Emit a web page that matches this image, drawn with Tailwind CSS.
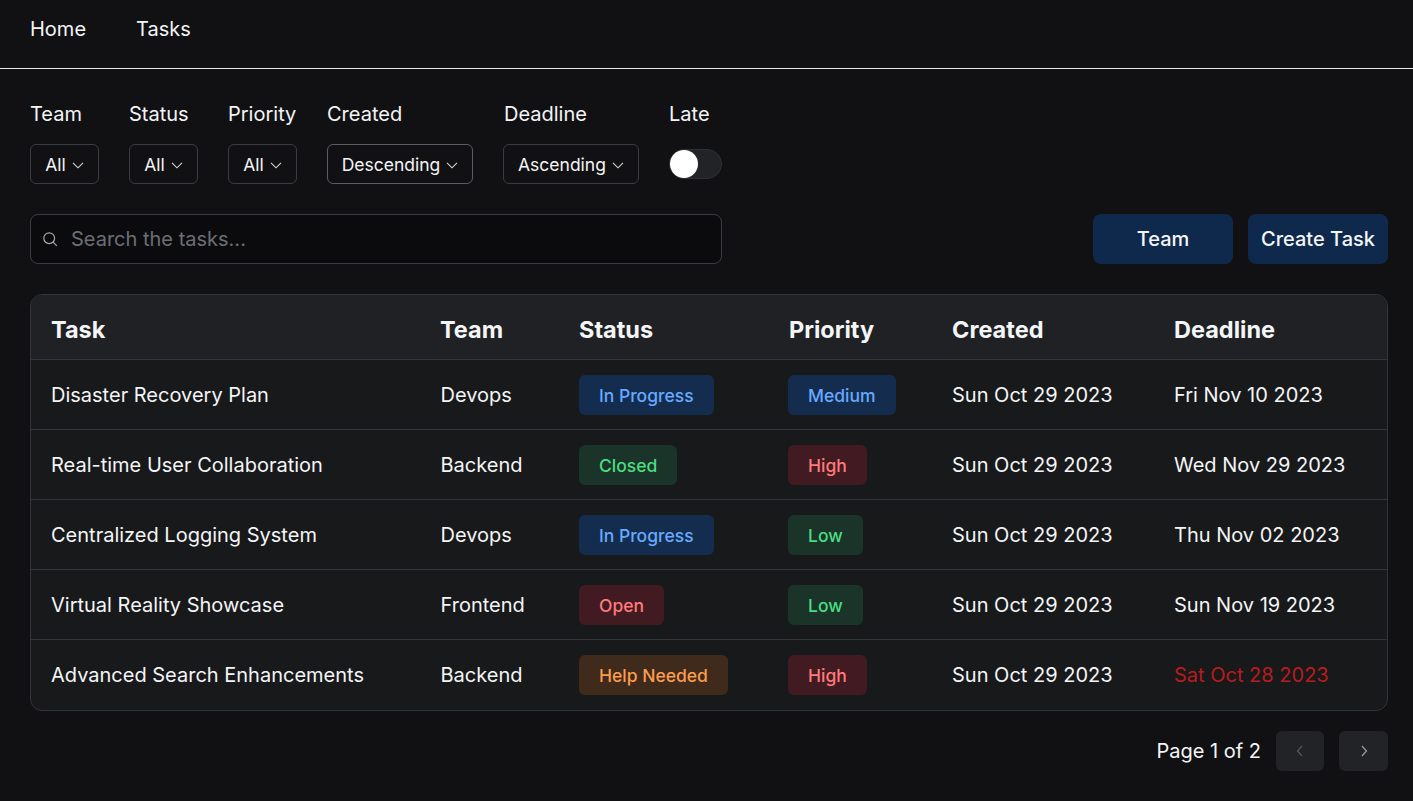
<!DOCTYPE html>
<html lang="en">
<head>
<meta charset="utf-8">
<title>Tasks</title>
<script src="https://cdn.jsdelivr.net/npm/@tailwindcss/browser@4"></script>
</head>
<body class="bg-[#111114] text-[#f4f5f6] font-['Inter',sans-serif] text-[20px] leading-[30px] overflow-hidden">

  <!-- Nav -->
  <nav class="h-[69px] border-b border-white/90 px-[30px] flex items-start pt-[14px] gap-[50px] text-[20px]">
    <a href="#" class="leading-[30px]">Home</a>
    <a href="#" class="leading-[30px]">Tasks</a>
  </nav>

  <main class="px-[25px] pl-[30px] pt-[30px]">
    <!-- Filters -->
    <div class="flex gap-[30px] h-[85px]">
      <div>
        <label class="block h-[45px] leading-[30px]">Team</label>
        <button class="h-10 w-[69px] pt-[2px] flex items-center justify-center gap-[6px] rounded-md border border-[#3a3d42] text-[17.5px]">All
          <svg class="w-3 h-3" viewBox="0 0 12 12" fill="none" stroke="#d5d7db" stroke-width="1.1"><path d="M1 3.8l5 5 5-5"/></svg>
        </button>
      </div>
      <div>
        <label class="block h-[45px] leading-[30px]">Status</label>
        <button class="h-10 w-[69px] pt-[2px] flex items-center justify-center gap-[6px] rounded-md border border-[#3a3d42] text-[17.5px]">All
          <svg class="w-3 h-3" viewBox="0 0 12 12" fill="none" stroke="#d5d7db" stroke-width="1.1"><path d="M1 3.8l5 5 5-5"/></svg>
        </button>
      </div>
      <div>
        <label class="block h-[45px] leading-[30px]">Priority</label>
        <button class="h-10 w-[69px] pt-[2px] flex items-center justify-center gap-[6px] rounded-md border border-[#3a3d42] text-[17.5px]">All
          <svg class="w-3 h-3" viewBox="0 0 12 12" fill="none" stroke="#d5d7db" stroke-width="1.1"><path d="M1 3.8l5 5 5-5"/></svg>
        </button>
      </div>
      <div>
        <label class="block h-[45px] leading-[30px]">Created</label>
        <button class="h-10 w-[146px] pt-[2px] flex items-center justify-center gap-[6px] rounded-md border border-[#5a5d63] text-[17.5px]">Descending
          <svg class="w-3 h-3" viewBox="0 0 12 12" fill="none" stroke="#d5d7db" stroke-width="1.1"><path d="M1 3.8l5 5 5-5"/></svg>
        </button>
      </div>
      <div>
        <label class="block h-[45px] leading-[30px] pl-px">Deadline</label>
        <button class="h-10 w-[136px] pt-[2px] flex items-center justify-center gap-[6px] rounded-md border border-[#3a3d42] text-[17.5px]">Ascending
          <svg class="w-3 h-3" viewBox="0 0 12 12" fill="none" stroke="#d5d7db" stroke-width="1.1"><path d="M1 3.8l5 5 5-5"/></svg>
        </button>
      </div>
      <div>
        <label class="block h-[50px] leading-[30px]">Late</label>
        <div class="w-[53px] h-[30px] rounded-full bg-[#212327] border border-[#2e3035] flex items-center">
          <span class="w-7 h-7 rounded-full bg-white"></span>
        </div>
      </div>
    </div>

    <!-- Search + actions -->
    <div class="flex justify-between items-start w-[1358px] mt-[30px]">
      <div class="w-[692px] h-[50px] rounded-lg border border-[#3a3d42] bg-[#0b0b0d] flex items-center pl-[11px] gap-[13px]">
        <svg class="w-4 h-4 shrink-0" viewBox="0 0 16 16" fill="none" stroke="#a5a8ad" stroke-width="1.2"><circle cx="7.2" cy="7.2" r="5.4"/><path d="M11.2 11.2l3.6 3.6"/></svg>
        <span class="text-[#6b6f76]">Search the tasks...</span>
      </div>
      <div class="flex gap-[15px]">
        <button class="w-[140px] h-[50px] rounded-lg bg-[#0f294d] font-medium">Team</button>
        <button class="w-[140px] h-[50px] rounded-lg bg-[#0f294d] font-medium">Create Task</button>
      </div>
    </div>

    <!-- Table -->
    <div class="w-[1358px] mt-[30px] rounded-xl border border-[#33353a] overflow-hidden bg-[#18191b]">
      <table class="w-full table-fixed border-collapse">
        <colgroup>
          <col class="w-[389px]"><col class="w-[138px]"><col class="w-[209px]"><col class="w-[164px]"><col class="w-[222px]"><col>
        </colgroup>
        <thead class="bg-[#202124]">
          <tr class="h-[64px] text-left text-[23.5px] font-bold">
            <th class="pl-[20px] pt-[6px] font-bold">Task</th>
            <th class="pl-[20px] pt-[6px] font-bold">Team</th>
            <th class="pl-[21px] pt-[6px] font-bold">Status</th>
            <th class="pl-[22px] pt-[6px] font-bold">Priority</th>
            <th class="pl-[21px] pt-[6px] font-bold">Created</th>
            <th class="pl-[21px] pt-[6px] font-bold">Deadline</th>
          </tr>
        </thead>
        <tbody>
          <tr class="h-[70px] border-t border-[#33353a] [&>td]:pt-[2px]">
            <td class="pl-[20px]">Disaster Recovery Plan</td>
            <td class="pl-[20.5px]">Devops</td>
            <td class="pl-[21px]"><span class="inline-flex items-center h-10 pt-[2px] px-[20px] rounded-md text-[17.5px] font-[450] bg-[#142d4f] text-[#66aaff]">In Progress</span></td>
            <td class="pl-[21px]"><span class="inline-flex items-center h-10 pt-[2px] px-[20px] rounded-md text-[17.5px] font-[450] bg-[#142d4f] text-[#66aaff]">Medium</span></td>
            <td class="pl-[21px]">Sun Oct 29 2023</td>
            <td class="pl-[21px]">Fri Nov 10 2023</td>
          </tr>
          <tr class="h-[70px] border-t border-[#33353a] [&>td]:pt-[2px]">
            <td class="pl-[20px]">Real-time User Collaboration</td>
            <td class="pl-[20.5px]">Backend</td>
            <td class="pl-[21px]"><span class="inline-flex items-center h-10 pt-[2px] px-[20px] rounded-md text-[17.5px] font-[450] bg-[#1b342a] text-[#4ade80]">Closed</span></td>
            <td class="pl-[21px]"><span class="inline-flex items-center h-10 pt-[2px] px-[20px] rounded-md text-[17.5px] font-[450] bg-[#421a21] text-[#ff7b7b]">High</span></td>
            <td class="pl-[21px]">Sun Oct 29 2023</td>
            <td class="pl-[21px]">Wed Nov 29 2023</td>
          </tr>
          <tr class="h-[70px] border-t border-[#33353a] [&>td]:pt-[2px]">
            <td class="pl-[20px]">Centralized Logging System</td>
            <td class="pl-[20.5px]">Devops</td>
            <td class="pl-[21px]"><span class="inline-flex items-center h-10 pt-[2px] px-[20px] rounded-md text-[17.5px] font-[450] bg-[#142d4f] text-[#66aaff]">In Progress</span></td>
            <td class="pl-[21px]"><span class="inline-flex items-center h-10 pt-[2px] px-[20px] rounded-md text-[17.5px] font-[450] bg-[#1b342a] text-[#4ade80]">Low</span></td>
            <td class="pl-[21px]">Sun Oct 29 2023</td>
            <td class="pl-[21px]">Thu Nov 02 2023</td>
          </tr>
          <tr class="h-[70px] border-t border-[#33353a] [&>td]:pt-[2px]">
            <td class="pl-[20px]">Virtual Reality Showcase</td>
            <td class="pl-[20.5px]">Frontend</td>
            <td class="pl-[21px]"><span class="inline-flex items-center h-10 pt-[2px] px-[20px] rounded-md text-[17.5px] font-[450] bg-[#421a21] text-[#ff7b7b]">Open</span></td>
            <td class="pl-[21px]"><span class="inline-flex items-center h-10 pt-[2px] px-[20px] rounded-md text-[17.5px] font-[450] bg-[#1b342a] text-[#4ade80]">Low</span></td>
            <td class="pl-[21px]">Sun Oct 29 2023</td>
            <td class="pl-[21px]">Sun Nov 19 2023</td>
          </tr>
          <tr class="h-[71px] border-t border-[#33353a] [&>td]:pt-[1px]">
            <td class="pl-[20px]">Advanced Search Enhancements</td>
            <td class="pl-[20.5px]">Backend</td>
            <td class="pl-[21px]"><span class="inline-flex items-center h-10 pt-[2px] px-[20px] rounded-md text-[17.5px] font-[450] bg-[#3f2a1c] text-[#fb9d4b]">Help Needed</span></td>
            <td class="pl-[21px]"><span class="inline-flex items-center h-10 pt-[2px] px-[20px] rounded-md text-[17.5px] font-[450] bg-[#421a21] text-[#ff7b7b]">High</span></td>
            <td class="pl-[21px]">Sun Oct 29 2023</td>
            <td class="pl-[21px] text-[#b91c1c]">Sat Oct 28 2023</td>
          </tr>
        </tbody>
      </table>
    </div>

    <!-- Pagination -->
    <div class="w-[1358px] mt-[20px] flex justify-end items-center gap-[15px]">
      <span>Page 1 of 2</span>
      <button class="w-12 h-10 rounded-md bg-[#212327] flex items-center justify-center">
        <svg class="w-4 h-4" viewBox="0 0 16 16" fill="none" stroke="#55585e" stroke-width="1.2"><path d="M10 3L5.5 8l4.5 5"/></svg>
      </button>
      <button class="w-[49px] h-10 rounded-md bg-[#212327] flex items-center justify-center">
        <svg class="w-4 h-4" viewBox="0 0 16 16" fill="none" stroke="#9a9da3" stroke-width="1.2"><path d="M6 3l4.5 5L6 13"/></svg>
      </button>
    </div>
  </main>
</body>
</html>
